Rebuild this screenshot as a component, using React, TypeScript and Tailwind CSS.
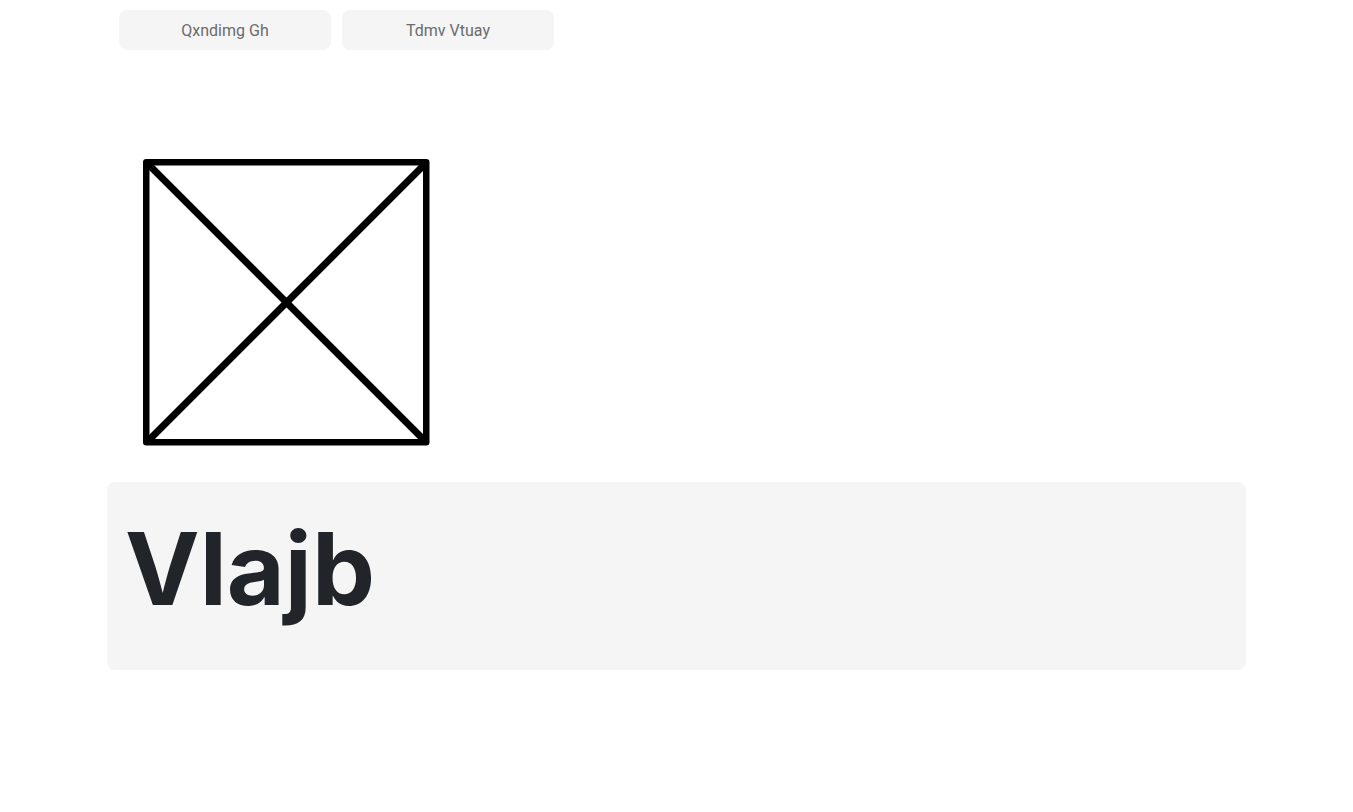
export default function App() {
  return (
    <div className="min-h-screen bg-white font-['Inter',sans-serif]">
      <main className="mx-auto w-full max-w-[1139px]">
        <nav className="flex gap-[11px] px-3 pt-[10px]">
          <button type="button" className="h-10 w-[212px] rounded-lg bg-[#f5f5f5] pt-0.5 font-['Roboto',sans-serif] text-base text-[#6b6b6b]">
            Qxndimg Gh
          </button>
          <button type="button" className="h-10 w-[212px] rounded-lg bg-[#f5f5f5] pt-0.5 font-['Roboto',sans-serif] text-base text-[#6b6b6b]">
            Tdmv Vtuay
          </button>
        </nav>
        <div className="px-9 pt-[109px]">
          <svg viewBox="0 0 287 287" className="block size-[287px]" fill="none" stroke="#000" aria-hidden="true">
            <rect x="3.25" y="3.25" width="280" height="280" strokeWidth="6.5" strokeLinejoin="round" />
            <path d="M4 4 283 283M283 4 4 283" strokeWidth="7" />
          </svg>
        </div>
        <section className="mt-9 rounded-lg bg-[#f5f5f5] px-[18px] pt-[25px] pb-[39px]">
          <h1 className="text-[100px] font-bold leading-[124px] text-[#212529]">Vlajb</h1>
        </section>
      </main>
    </div>
  );
}
